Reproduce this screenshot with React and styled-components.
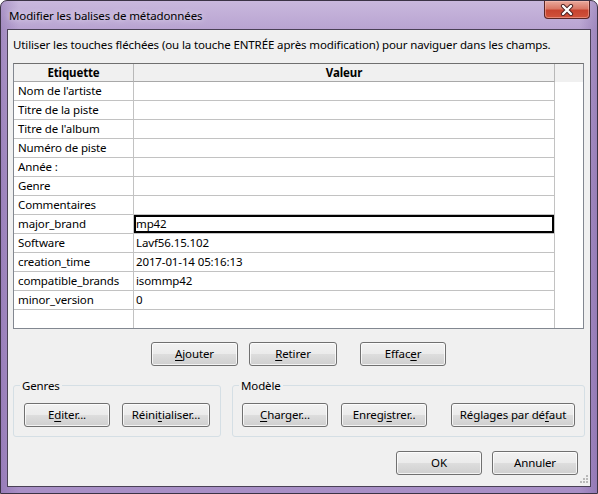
import React from 'react';
import styled, { createGlobalStyle } from 'styled-components';

const GlobalStyle = createGlobalStyle`
  html, body { margin: 0; padding: 0; background: #fff; }
  body { font-family: "Noto Sans", "Open Sans", sans-serif; }
`;

const FONT = `"Noto Sans", "Open Sans", sans-serif`;

const Window = styled.div`
  box-sizing: border-box;
  width: 598px;
  height: 494px;
  border: 1px solid #3b3345;
  border-radius: 7px 7px 0 0;
  background:
    linear-gradient(90deg, rgba(120, 90, 160, 0.35) 0%, rgba(255, 255, 255, 0) 3%, rgba(255, 255, 255, 0) 97%, rgba(110, 80, 150, 0.35) 100%),
    linear-gradient(180deg, #c9b8dd 0%, #b8a3d1 6%, #ad96c9 40%, #a88fc6 100%);
  display: flex;
  flex-direction: column;
  overflow: hidden;
  font-family: ${FONT};
  font-size: 11.5px;
  letter-spacing: -0.12px;
`;

const TitleBar = styled.div`
  height: 28px;
  display: flex;
  align-items: flex-start;
  justify-content: space-between;
  padding: 0 7px 0 8px;
  flex-shrink: 0;
`;

const TitleText = styled.div`
  line-height: 16px;
  padding-top: 7px;
  color: #000;
  text-shadow: 0 0 6px rgba(255, 255, 255, 0.8);
`;

const CloseButton = styled.div`
  box-sizing: border-box;
  width: 46px;
  height: 18px;
  border: 1px solid #5a2626;
  border-top: none;
  border-radius: 0 0 4px 4px;
  background: linear-gradient(180deg, #e9a99c 0%, #d97866 45%, #c7432f 55%, #d0533c 100%);
  box-shadow: inset 0 0 0 1px rgba(255, 200, 190, 0.45);
  display: flex;
  align-items: center;
  justify-content: center;
`;

const Client = styled.div`
  position: relative;
  flex: 1;
  margin: 0 6px 6px;
  border: 1px solid #4a4156;
  background: #f0f0f0;
  display: flex;
  flex-direction: column;
`;

const Instruction = styled.div`
  padding: 7px 0 0 5px;
  line-height: 15px;
  height: 15px;
  color: #000;
  white-space: nowrap;
`;

const Table = styled.div`
  box-sizing: border-box;
  margin: 11px 6px 0 5px;
  height: 266px;
  border: 1px solid #828790;
  border-top-color: #6f6f6f;
  background: #fff;
  overflow: hidden;
`;

const Row = styled.div`
  display: flex;
  height: ${p => (p.$header ? 18 : 19)}px;
`;

const Cell = styled.div`
  box-sizing: border-box;
  width: ${p => p.$w}px;
  flex-shrink: 0;
  border-right: 1px solid ${p => (p.$header ? '#b8b8b8' : '#c2c2c2')};
  border-bottom: 1px solid ${p => (p.$header ? '#a8a8a8' : '#c2c2c2')};
  background: ${p => (p.$header ? '#f0f0f0' : '#fff')};
  font-weight: ${p => (p.$header ? 700 : 400)};
  text-align: ${p => (p.$header ? 'center' : 'left')};
  padding-left: ${p => (p.$header ? 0 : p.$pad)}px;
  line-height: ${p => (p.$header ? 17 : 18)}px;
  color: #000;
  white-space: nowrap;
  overflow: hidden;
  box-shadow: ${p => (p.$editing ? 'inset 0 0 0 2px #000' : 'none')};
`;

const Filler = styled.div`
  flex: 1;
  background: ${p => (p.$header ? '#f0f0f0' : '#fff')};
`;

const ActionRow = styled.div`
  display: flex;
  margin-top: 13px;
  padding-left: 143px;
`;

const Button = styled.button`
  box-sizing: border-box;
  width: ${p => p.$w}px;
  height: 24px;
  margin: 0 0 0 ${p => p.$ml || 0}px;
  padding: 0;
  border: 1px solid #707070;
  border-radius: 3px;
  background: linear-gradient(180deg, #f2f2f2 0%, #ebebeb 48%, #dddddd 52%, #cfcfcf 100%);
  box-shadow: inset 0 0 0 1px rgba(255, 255, 255, 0.75);
  font-family: ${FONT};
  font-size: 11.5px;
  letter-spacing: -0.12px;
  color: #000;
  line-height: 20px;
  flex-shrink: 0;

  u { text-decoration: underline; text-underline-offset: 2px; }
`;

const GroupRow = styled.div`
  display: flex;
  margin: 12px 0 0 5px;
  gap: 11px;
`;

const Group = styled.fieldset`
  box-sizing: border-box;
  width: ${p => p.$w}px;
  margin: 0;
  padding: 10px 0 9px ${p => p.$pl}px;
  border: 1px solid #d5dfe5;
  border-radius: 3px;
  display: flex;
  min-inline-size: 0;
`;

const Legend = styled.legend`
  padding: 0 2px;
  margin-left: ${p => p.$ml}px;
  line-height: 15px;
  color: #000;
`;

const FooterRow = styled.div`
  display: flex;
  justify-content: flex-end;
  margin-top: 14px;
  padding-right: 12px;
  gap: 10px;
`;

const Grip = styled.svg`
  position: absolute;
  right: 2px;
  bottom: 2px;
`;

const rows = [
  ['Nom de l\'artiste', ''],
  ['Titre de la piste', ''],
  ['Titre de l\'album', ''],
  ['Numéro de piste', ''],
  ['Année :', ''],
  ['Genre', ''],
  ['Commentaires', ''],
  ['major_brand', 'mp42', true],
  ['Software', 'Lavf56.15.102'],
  ['creation_time', '2017-01-14 05:16:13'],
  ['compatible_brands', 'isommp42'],
  ['minor_version', '0'],
  ['', ''],
];

function CloseGlyph() {
  return (
    <svg width="14" height="12" viewBox="0 0 14 12">
      <path d="M3 2 L11 10 M11 2 L3 10" stroke="#4a2020" strokeWidth="4.2" strokeLinecap="round" />
      <path d="M3 2 L11 10 M11 2 L3 10" stroke="#ffffff" strokeWidth="2.4" strokeLinecap="round" />
    </svg>
  );
}

export default function App() {
  return (
    <>
      <GlobalStyle />
      <Window>
        <TitleBar>
          <TitleText>Modifier les balises de métadonnées</TitleText>
          <CloseButton><CloseGlyph /></CloseButton>
        </TitleBar>
        <Client>
          <Instruction>
            Utiliser les touches fléchées (ou la touche ENTRÉE après modification) pour naviguer dans les champs.
          </Instruction>

          <Table>
            <Row $header>
              <Cell $header $w={120}>Etiquette</Cell>
              <Cell $header $w={421}>Valeur</Cell>
              <Filler $header />
            </Row>
            {rows.map(([label, value, editing], i) => (
              <Row key={i}>
                <Cell $w={120} $pad={4}>{label}</Cell>
                <Cell $w={421} $pad={2} $editing={editing}>{value}</Cell>
                <Filler />
              </Row>
            ))}
          </Table>

          <ActionRow>
            <Button $w={87}><u>A</u>jouter</Button>
            <Button $w={88} $ml={11}><u>R</u>etirer</Button>
            <Button $w={86} $ml={23}>Effac<u>e</u>r</Button>
          </ActionRow>

          <GroupRow>
            <Group $w={208} $pl={10}>
              <Legend $ml={-4}>Genres</Legend>
              <Button $w={86}>E<u>d</u>iter...</Button>
              <Button $w={88} $ml={12}>Réini<u>t</u>ialiser...</Button>
            </Group>
            <Group $w={353} $pl={9}>
              <Legend $ml={-3}>Modèle</Legend>
              <Button $w={86}><u>C</u>harger...</Button>
              <Button $w={86} $ml={13}>Enregi<u>s</u>trer..</Button>
              <Button $w={124} $ml={24}>Réglages par dé<u>f</u>aut</Button>
            </Group>
          </GroupRow>

          <FooterRow>
            <Button $w={86}>OK</Button>
            <Button $w={86}>Annuler</Button>
          </FooterRow>

          <Grip width="10" height="10" viewBox="0 0 10 10">
            {[[8, 0], [8, 3], [5, 3], [8, 6], [5, 6], [2, 6]].map(([x, y], i) => (
              <rect key={i} x={x} y={y + 1} width="2" height="2" fill="#b9b9b9" />
            ))}
          </Grip>
        </Client>
      </Window>
    </>
  );
}
